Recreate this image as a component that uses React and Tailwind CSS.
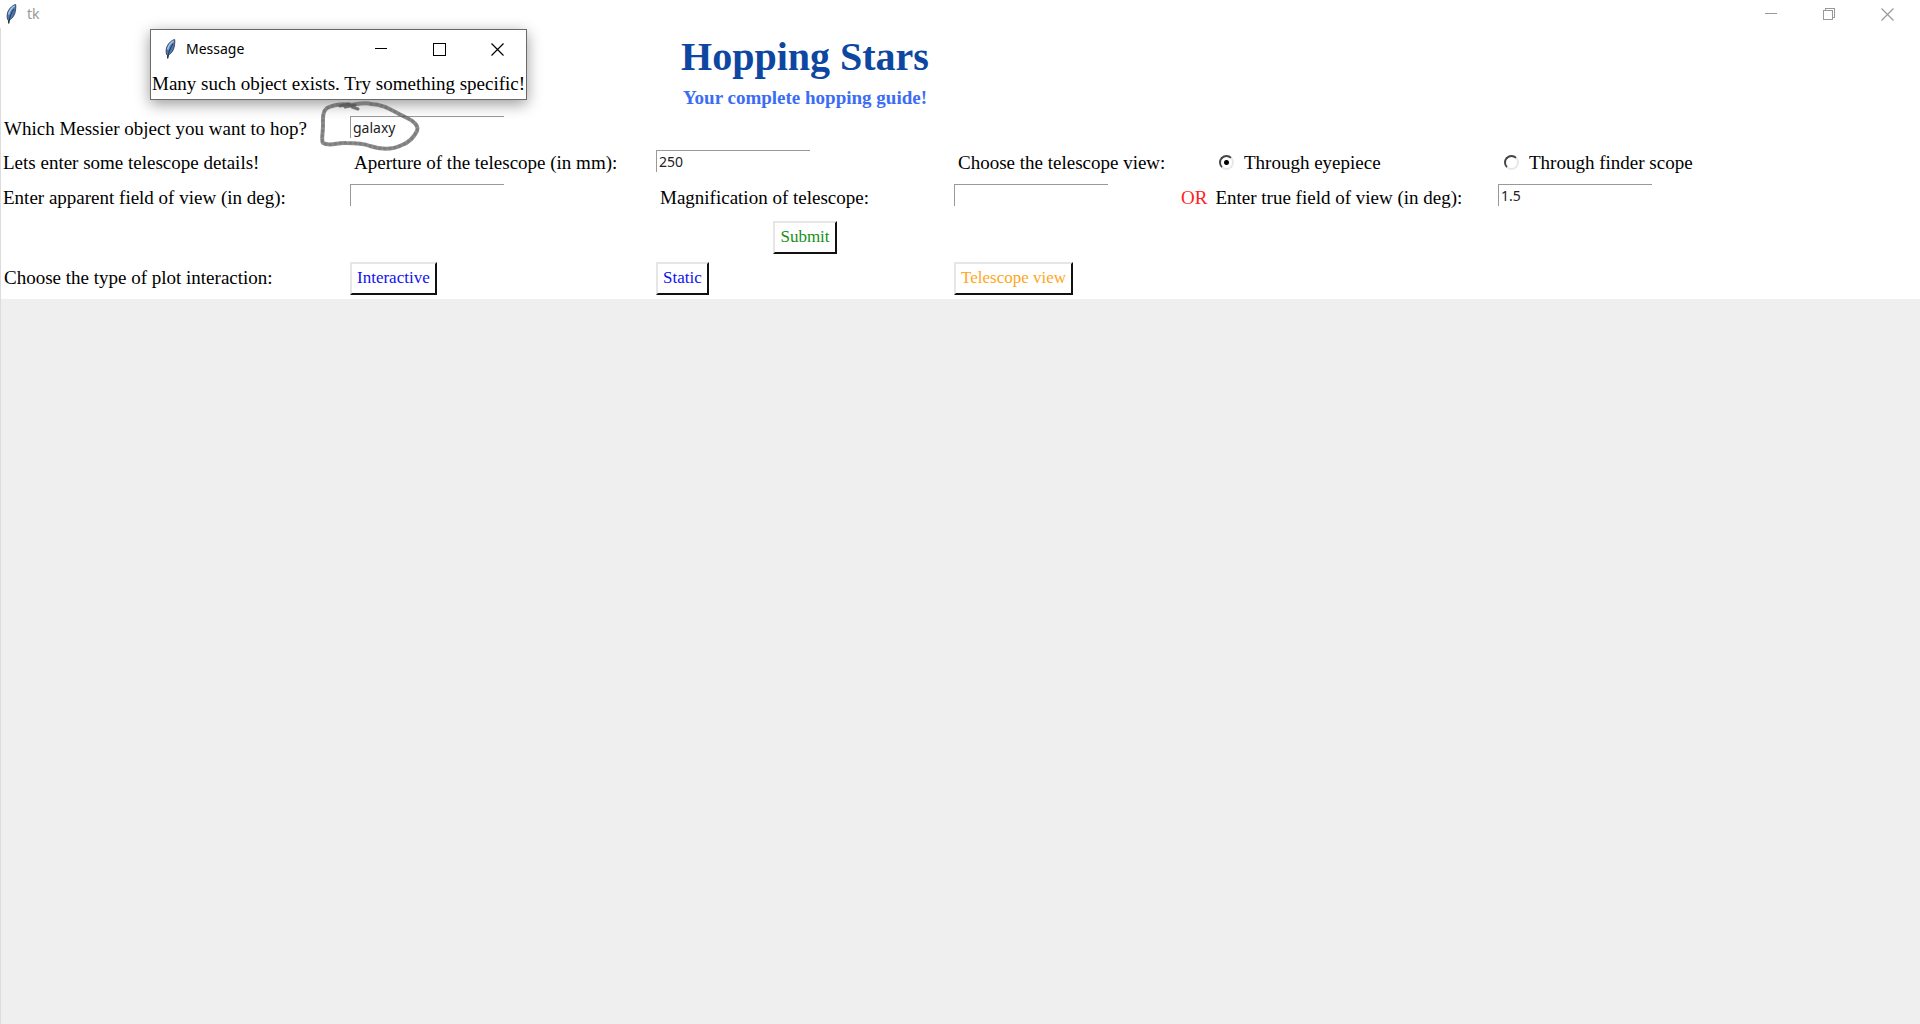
import React from "react";

const SERIF = "font-['Liberation_Serif',serif]";
const SANS = "font-['Noto_Sans',sans-serif]";

function Feather() {
  return (
    <svg width="11" height="20" viewBox="0 0 11 20" aria-hidden="true">
      <path d="M9.6 0.5C7 1 3.4 4 1.8 8C0.8 11 1 13.5 1.6 15.5L2.4 15.8L2.7 19.5L3.5 16C6.5 14.5 8.8 11 9.4 7C9.8 4 10 2 9.6 0.5Z" fill="#4a7ab8" stroke="#2a3342" strokeWidth="0.8" />
      <path d="M8.6 1.8C6 3.4 3.6 6.4 2.6 10.5" fill="none" stroke="#a9c5e8" strokeWidth="1.5" />
      <path d="M7.8 5C5.8 8.5 3.4 12.5 2.7 19" fill="none" stroke="#1c2433" strokeWidth="0.8" />
    </svg>
  );
}

function Minimize({ size }) {
  return (
    <svg width={size} height={size} viewBox={`0 0 ${size} ${size}`} shapeRendering="crispEdges" aria-hidden="true">
      <path d={`M0 ${size / 2 - 0.5}H${size}`} stroke="currentColor" />
    </svg>
  );
}

function Close() {
  return (
    <svg width="13" height="13" viewBox="0 0 13 13" aria-hidden="true">
      <path d="M0.5 0.5L12.5 12.5M12.5 0.5L0.5 12.5" stroke="currentColor" strokeWidth="1.2" />
    </svg>
  );
}

function CaptionButton({ label, children }) {
  return (
    <button type="button" aria-label={label} className="flex h-7 w-[58px] items-center justify-center">
      {children}
    </button>
  );
}

function Entry({ id, value }) {
  return (
    <input
      id={id}
      type="text"
      defaultValue={value}
      className={`${SANS} mt-1 block h-[22px] w-[154px] border-t border-l border-[#999] bg-white pl-[2px] text-[14px] leading-5 text-[#222] outline-none`}
    />
  );
}

function PushButton({ color, children }) {
  return (
    <button
      type="button"
      className={`${color} h-[33px] border-2 border-t-[#e6e6e6] border-r-[#111] border-b-[#111] border-l-[#e6e6e6] bg-white px-[5px] text-[17px] leading-5 whitespace-nowrap`}
    >
      {children}
    </button>
  );
}

function Radio({ label, checked }) {
  return (
    <label className="flex items-center gap-[10px] whitespace-nowrap">
      <input
        type="radio"
        name="view"
        defaultChecked={checked}
        className="size-[15px] -translate-y-px appearance-none rounded-full border-2 border-t-[#444] border-r-[#e8e8e8] border-b-[#e8e8e8] border-l-[#444] bg-white checked:bg-[radial-gradient(circle,#000_0_2px,#fff_3px)]"
      />
      {label}
    </label>
  );
}

const COLS = "grid grid-cols-[349fr_306fr_298fr_215fr_329fr_422fr]";

export default function App() {
  return (
    <div className={`${SERIF} relative flex min-h-screen flex-col bg-[#efefef] text-[19px] leading-6 text-black`}>
      <header className="flex h-7 items-center bg-white pl-[6px] text-[#999]">
        <Feather />
        <span className={`${SANS} ml-[10px] text-[14px]`}>tk</span>
        <div className="ml-auto flex pr-1">
          <CaptionButton label="Minimize"><Minimize size={12} /></CaptionButton>
          <CaptionButton label="Restore">
            <svg width="12" height="12" viewBox="0 0 12 12" fill="none" stroke="currentColor" shapeRendering="crispEdges" aria-hidden="true">
              <path d="M0.5 2.5H9.5V11.5H0.5ZM2.5 2.5V0.5H11.5V9.5H9.5" />
            </svg>
          </CaptionButton>
          <CaptionButton label="Close"><Close /></CaptionButton>
        </div>
      </header>

      <div className="flex flex-1 flex-col border-l border-[#dcdcdc]">
        <main className="bg-white pb-px">
          <div className={COLS}>
            <div className="col-start-3 text-center whitespace-nowrap">
              <h1 className="pt-1 text-[40px] leading-[50px] font-bold text-[#0d47a1]">Hopping Stars</h1>
              <p className="pt-1 pb-[2px] font-bold text-[#3b6cf6]">Your complete hopping guide!</p>
            </div>
          </div>

          <div className={`${COLS} h-[34px]`}>
            <label htmlFor="object" className="self-center pl-[3px]">Which Messier object you want to hop?</label>
            <div className="relative">
              <Entry id="object" value="galaxy" />
              <svg className="pointer-events-none absolute -top-3 -left-8 z-20" width="104" height="56" viewBox="0 0 104 56" fill="none" stroke="#555" strokeLinecap="round" strokeLinejoin="round" aria-hidden="true">
                <path d="M35 5C24 3 15 5 9 8C4 12 5 19 5 26C5 33 3 40 5 43C12 47 20 42 28 43C38 43 47 44 52 46C64 50 76 49 84 45C92 42 96 37 99 31C101 26 96 21 89 18C76 12 66 4 53 4C47 2 40 4 33 5" strokeWidth="4" strokeOpacity="0.65" />
                <path d="M35 5C24 3 15 5 9 8C4 12 5 19 5 26C5 33 3 40 5 43C12 47 20 42 28 43C38 43 47 44 52 46C64 50 76 49 84 45C92 42 96 37 99 31C101 26 96 21 89 18C76 12 66 4 53 4" strokeWidth="3" strokeOpacity="0.3" strokeDasharray="1 4" />
                <path d="M22 6L31 4L27 7L37 5L34 7L40 9" strokeWidth="3" strokeOpacity="0.8" />
              </svg>
            </div>
          </div>

          <div className={`${COLS} h-[34px] items-center`}>
            <span className="pl-[2px]">Lets enter some telescope details!</span>
            <label htmlFor="aperture" className="pl-1 whitespace-nowrap">Aperture of the telescope (in mm):</label>
            <div className="self-start"><Entry id="aperture" value="250" /></div>
            <span className="pl-1 whitespace-nowrap">Choose the telescope view:</span>
            <div className="pl-[50px]"><Radio label="Through eyepiece" checked /></div>
            <div className="pl-[6px]"><Radio label="Through finder scope" /></div>
          </div>

          <div className={`${COLS} h-9 items-center`}>
            <label htmlFor="apparent" className="pl-[2px]">Enter apparent field of view (in deg):</label>
            <div className="self-start"><Entry id="apparent" /></div>
            <label htmlFor="magnification" className="pl-1">Magnification of telescope:</label>
            <div className="self-start"><Entry id="magnification" /></div>
            <div className="flex gap-2 pl-3 whitespace-nowrap">
              <span className="text-[#f22]">OR</span>
              <label htmlFor="truefield">Enter true field of view (in deg):</label>
            </div>
            <div className="self-start"><Entry id="truefield" value="1.5" /></div>
          </div>

          <div className={`${COLS} h-[42px] items-center`}>
            <div className="col-start-3 flex justify-center">
              <PushButton color="text-[#159015]">Submit</PushButton>
            </div>
          </div>

          <div className={`${COLS} h-10 items-center`}>
            <span className="pl-[3px]">Choose the type of plot interaction:</span>
            <div><PushButton color="text-[#1010f0]">Interactive</PushButton></div>
            <div><PushButton color="text-[#1010f0]">Static</PushButton></div>
            <div><PushButton color="text-[#ffa61a]">Telescope view</PushButton></div>
          </div>
        </main>
      </div>

      <section role="dialog" aria-label="Message" className="absolute top-[29px] left-[150px] z-10 border border-[#6a6a6a] bg-white shadow-[0_4px_14px_rgba(0,0,0,0.4)]">
        <div className="flex h-[38px] items-center pl-[14px]">
          <Feather />
          <span className={`${SANS} ml-[10px] text-[14px]`}>Message</span>
          <div className="ml-auto flex">
            <CaptionButton label="Minimize message"><Minimize size={12} /></CaptionButton>
            <CaptionButton label="Maximize message">
              <svg width="13" height="13" viewBox="0 0 13 13" fill="none" stroke="currentColor" shapeRendering="crispEdges" aria-hidden="true">
                <path d="M0.5 0.5H12.5V12.5H0.5Z" />
              </svg>
            </CaptionButton>
            <CaptionButton label="Close message"><Close /></CaptionButton>
          </div>
        </div>
        <p className="px-px pt-1 pb-[3px] whitespace-nowrap">Many such object exists. Try something specific!</p>
      </section>
    </div>
  );
}
